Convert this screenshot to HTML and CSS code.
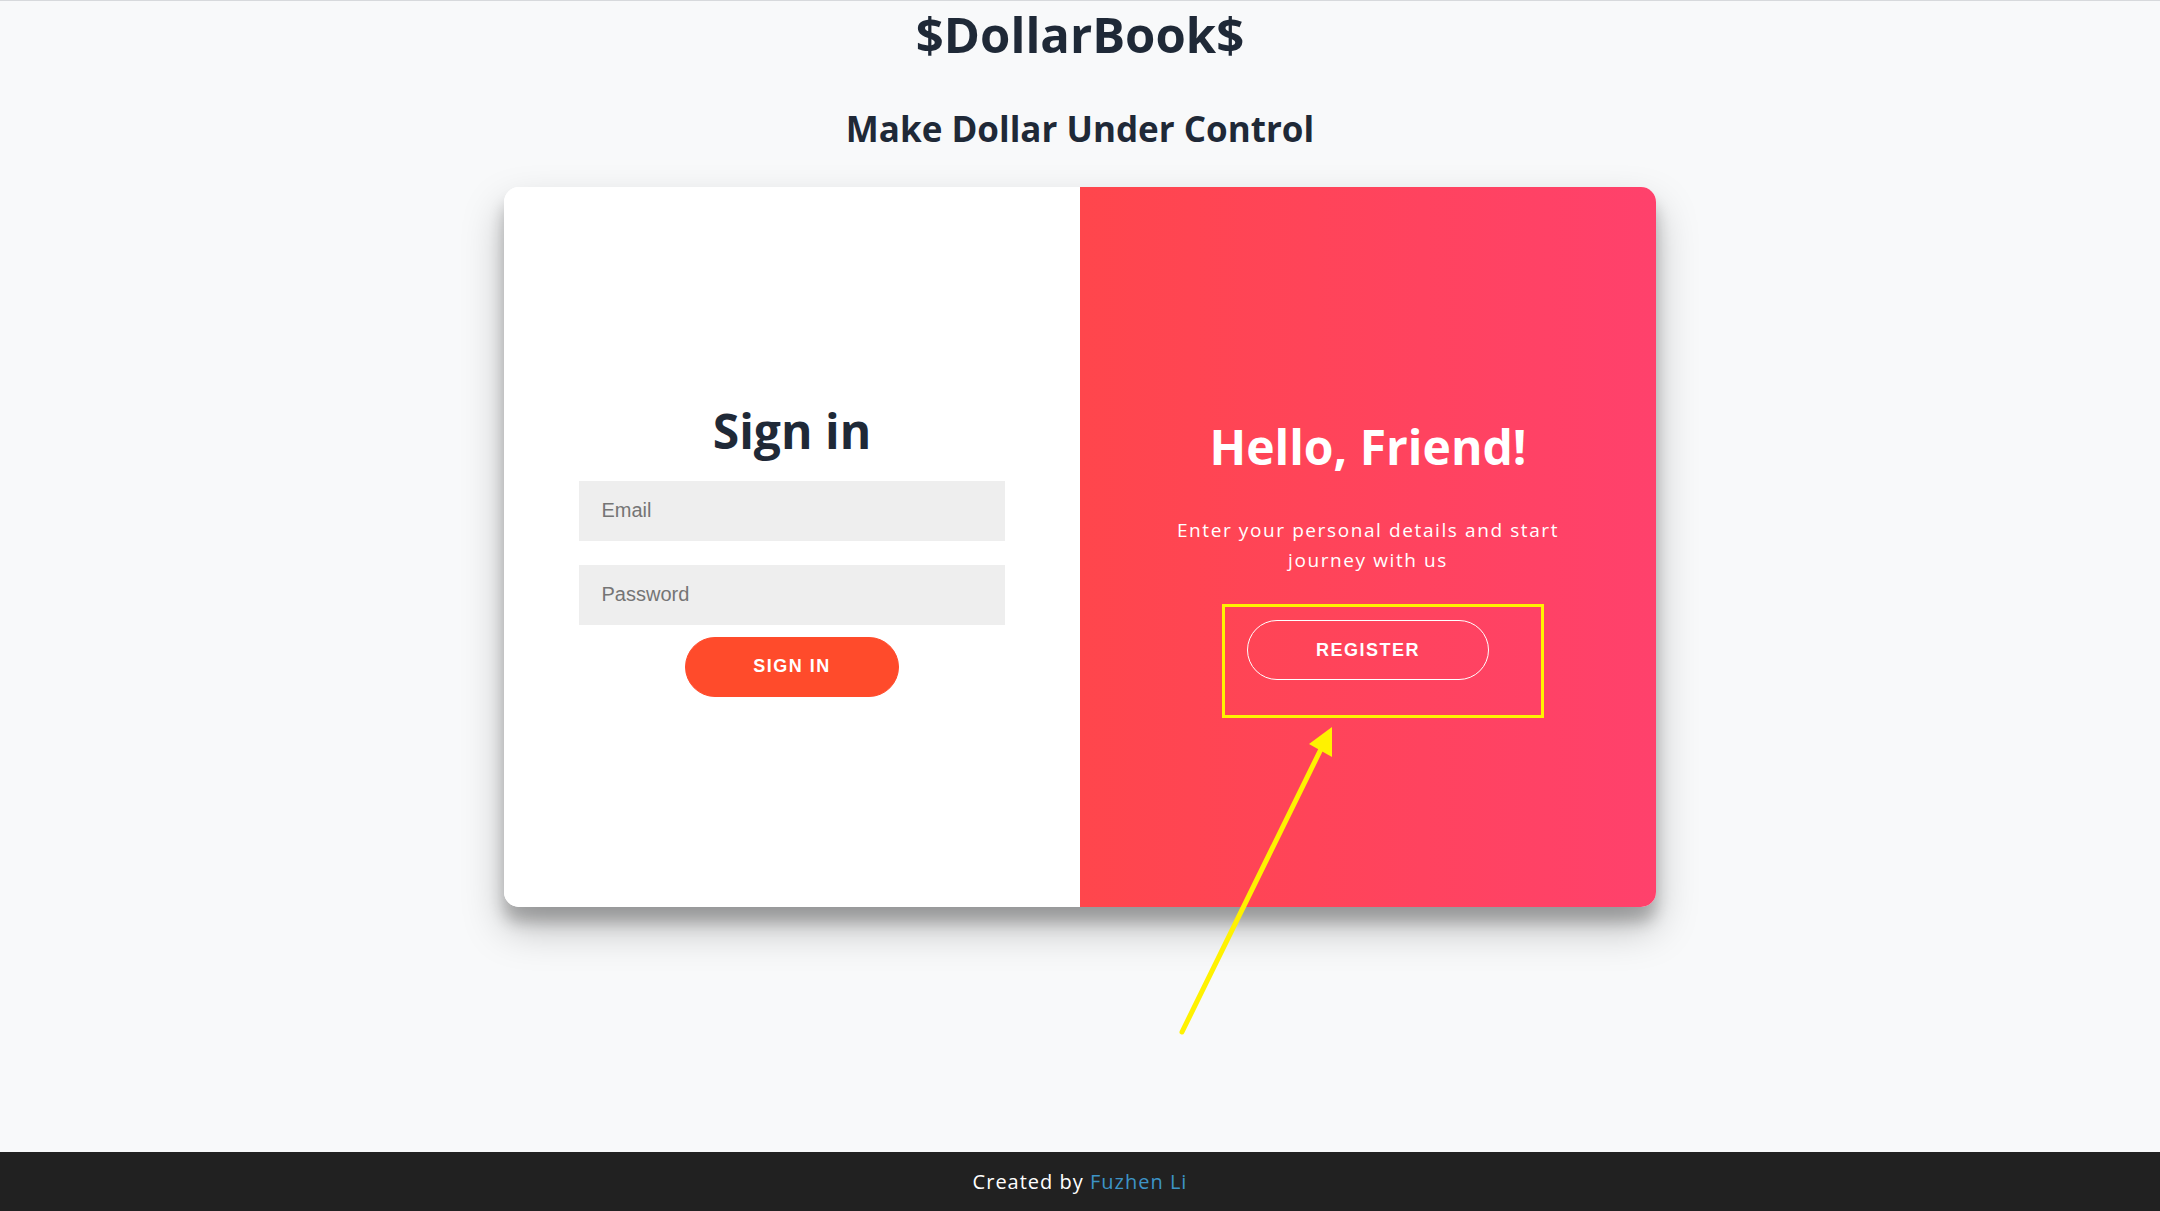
FILE: index.html
```html
<!DOCTYPE html>
<html lang="en">
<head>
<meta charset="utf-8">
<title>$DollarBook$</title>
<link rel="stylesheet" href="styles.css">
</head>
<body>
  <div class="page">
    <header class="masthead">
      <h1 class="brand">$DollarBook$</h1>
      <h2 class="tagline">Make Dollar Under Control</h2>
    </header>

    <main class="main">
      <div class="card">
        <form class="panel panel-form">
          <h1 class="panel-title">Sign in</h1>
          <input class="field" type="email" placeholder="Email">
          <input class="field" type="password" placeholder="Password">
          <button class="btn btn-solid" type="button">Sign In</button>
        </form>
        <div class="panel panel-overlay">
          <h1 class="panel-title panel-title-light">Hello, Friend!</h1>
          <p class="panel-text">Enter your personal details and start journey with us</p>
          <button class="btn btn-ghost" type="button">Register</button>
        </div>
      </div>
    </main>

    <footer class="footer">
      <span>Created by <a class="footer-link" href="#">Fuzhen Li</a></span>
    </footer>
  </div>

  <svg class="annotation" width="2160" height="1211" viewBox="0 0 2160 1211" xmlns="http://www.w3.org/2000/svg">
    <rect x="1223.5" y="605.5" width="319" height="111" fill="none" stroke="#fff200" stroke-width="3"/>
    <line x1="1182" y1="1032" x2="1322" y2="747" stroke="#fff200" stroke-width="5" stroke-linecap="round"/>
    <polygon points="1332,727 1309,744 1332,757" fill="#fff200"/>
  </svg>
</body>
</html>
```

FILE: styles.css
```css
* {
  box-sizing: border-box;
}

html, body {
  margin: 0;
  padding: 0;
}

body {
  background: #f8f9fa;
  font-family: "Open Sans", "Liberation Sans", sans-serif;
  color: #1f2937;
  border-top: 1px solid #d7d9dc;
  position: relative;
}

.page {
  min-height: 1210px;
  display: flex;
  flex-direction: column;
}

.masthead {
  text-align: center;
}

.brand {
  margin: 3px 0 0;
  font-size: 49px;
  line-height: 60px;
  font-weight: 700;
  color: #1f2937;
}

.tagline {
  margin: 41px 0 0;
  font-size: 35px;
  line-height: 48px;
  font-weight: 700;
  color: #1f2937;
}

.main {
  display: flex;
  justify-content: center;
  padding-top: 34px;
}

.card {
  width: 1152px;
  height: 720px;
  border-radius: 15px;
  overflow: hidden;
  background: #fff;
  display: flex;
  box-shadow: 0 21px 42px rgba(0, 0, 0, 0.25), 0 15px 15px rgba(0, 0, 0, 0.22);
}

.panel {
  flex: 0 0 50%;
  width: 50%;
  min-width: 0;
  display: flex;
  flex-direction: column;
  align-items: center;
  justify-content: center;
  text-align: center;
}

.panel-form {
  background: #fff;
  padding: 0 75px;
  margin: 0;
}

.panel-overlay {
  background: linear-gradient(to right, #ff464c, #ff416c);
  color: #fff;
  padding: 0 60px;
}

.panel-title {
  margin: 0;
  font-size: 48px;
  line-height: 65px;
  padding-bottom: 6px;
  font-weight: 700;
  color: #1f2937;
}

.panel-title-light {
  color: #fff;
}

.field {
  display: block;
  width: 100%;
  min-width: 0;
  height: 60px;
  margin: 12px 0;
  padding: 0 22.5px;
  border: none;
  outline: none;
  background: #eeeeee;
  font-family: "Liberation Sans", Arial, sans-serif;
  font-size: 20px;
  color: #333;
}

.field::placeholder {
  color: #757575;
}

.btn {
  height: 60px;
  padding: 0 67.5px;
  border-radius: 30px;
  font-family: "Liberation Sans", Arial, sans-serif;
  font-size: 18px;
  font-weight: 700;
  letter-spacing: 1.5px;
  text-transform: uppercase;
  color: #fff;
  cursor: pointer;
}

.btn-solid {
  background: #ff4b2b;
  border: 1px solid #ff4b2b;
}

.btn-ghost {
  background: transparent;
  border: 1px solid #ffffff;
}

.panel-text {
  margin: 30px 0 45px;
  font-size: 19px;
  line-height: 30px;
  letter-spacing: 1.6px;
  font-weight: 400;
}

.footer {
  margin-top: auto;
  height: 59px;
  background: #212121;
  color: #fff;
  display: flex;
  align-items: center;
  justify-content: center;
  font-size: 20px;
  letter-spacing: 1px;
}

.footer-link {
  color: #3d94c6;
  text-decoration: none;
}

.annotation {
  position: absolute;
  top: -1px;
  left: 0;
  pointer-events: none;
}
```
